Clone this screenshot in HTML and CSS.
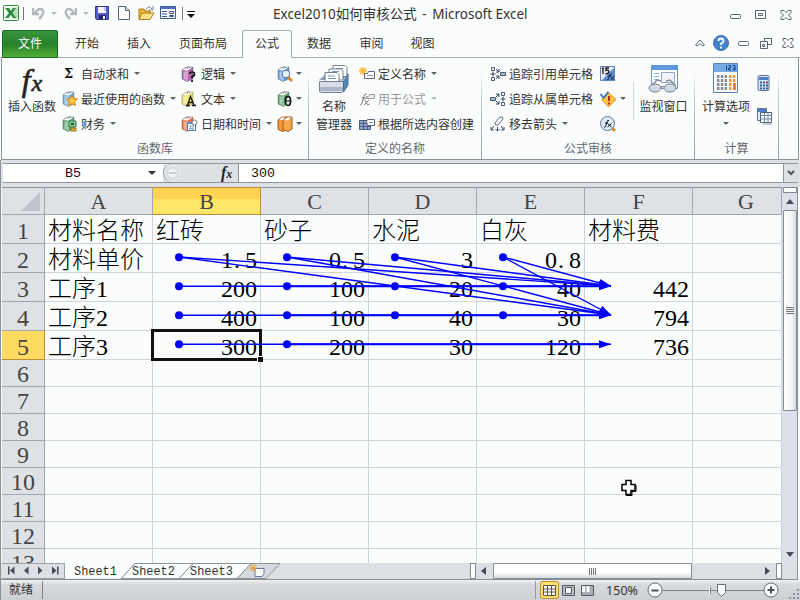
FILE: index.html
```html
<!DOCTYPE html>
<html lang="zh-CN">
<head>
  <meta charset="UTF-8">
  <title>Excel2010如何审核公式 - Microsoft Excel</title>
  <link rel="stylesheet" href="styles.css">
</head>
<body>
  <!-- Shared symbols -->
  <svg class="defs" width="0" height="0">
    <symbol id="book" viewBox="0 0 16 16">
      <path d="M1 4 L5 1 L12 1 L12 13 L6 15.5 L1 13Z" fill="currentColor" stroke="#556" stroke-opacity=".4"/>
      <path d="M1.5 4 L5.5 1.5 L11.5 1.5 L6.5 4.5Z" fill="#fff"/>
      <path d="M2.5 5.5 V13 L5 14 V5.5Z" fill="#fff" opacity=".45"/>
      <path d="M6 4.5 V15" stroke="#fff" opacity=".7"/>
      <path d="M6 3 Q7 -1 9 2" fill="none" stroke="#888"/>
    </symbol>
    <symbol id="close" viewBox="0 0 12 10">
      <path d="M1 .5h3l2 2 2-2h3v2L8.500 5 11 7.500v2H8l-2-2-2 2H1v-2L3.500 5 1 2.500z" fill="#fff" stroke="#5c6270"/>
    </symbol>
  </svg>

  <div class="window">
    <!-- Title bar -->
    <div class="titlebar">
      <div class="quick">
        <svg class="q-logo" width="16" height="16"><rect x=".5" y=".5" width="15" height="15" rx="1" fill="#f4fbf2" stroke="#2f8a3b"/><path d="M10 2h5v12h-5z" fill="#d4e9d0"/><path d="M2 3h4l2 3 2-3h3L9.500 8l4 5H10L7.700 9.700 5.500 13H2l4-5z" fill="#25893a"/><path d="M10.500 5h4M10.500 8h4M10.500 11h4" stroke="#8cbb8b"/></svg>
        <i class="sep"></i>
        <svg class="q-undo" width="13" height="13"><path d="M1 1v6h6" fill="none" stroke="#b4b8be" stroke-width="2.500"/><path d="M3 6 Q7 0 10.500 3 Q13 6 7 12" fill="none" stroke="#b4b8be" stroke-width="2.500"/></svg>
        <i class="arrow dim"></i>
        <svg class="q-redo" width="13" height="13"><path d="M12 1v6H6" fill="none" stroke="#b4b8be" stroke-width="2.500"/><path d="M10 6 Q6 0 2.500 3 Q0 6 6 12" fill="none" stroke="#b4b8be" stroke-width="2.500"/></svg>
        <i class="arrow dim"></i>
        <svg class="q-save" width="14" height="14"><path d="M.5.5h13v13h-12l-1-1z" fill="#5660c8" stroke="#353d98"/><path d="M3 1h8v6H3z" fill="#f3f6ff"/><path d="M9 1h2v4H9z" fill="#b8c4ee"/><path d="M4 9h7v4H4z" fill="#23265e"/><path d="M8 10h2v3H8z" fill="#fff"/></svg>
        <svg class="q-new" width="12" height="14"><path d="M.5.5h7l4 4v9H.5z" fill="#fff" stroke="#53627c"/><path d="M7.500.5v4h4" fill="#dbe5f4" stroke="#53627c"/></svg>
        <svg class="q-open" width="17" height="15"><path d="M1 3h5l1 2h5v8H1z" fill="#e9b33c" stroke="#a97714"/><path d="M1 13.500 L4 7h12l-4 6.500z" fill="#ffe08a" stroke="#b07c15"/><path d="M8 3 Q11-1 14 3M15 0v4h-4" fill="none" stroke="#7b8ca6"/></svg>
        <svg class="q-form" width="16" height="14"><path d="M.5.5h15v12H.5z" fill="#f4f7fc" stroke="#40598c"/><path d="M1 1h14v2H1z" fill="#4b72bb"/><path d="M2 5.500h5M2 8h5M2 10.500h5" stroke="#40598c"/><path d="M9.500 5.500h4v2h-4zM9.500 9.500h4v1h-4z" fill="#fff" stroke="#40598c"/></svg>
        <i class="sep sep-last"></i>
        <svg class="q-more" width="8" height="7"><path d="M0 .5h8" stroke="#111"/><path d="M0 3h8l-4 4z" fill="#111"/></svg>
      </div>
      <div class="title">Excel2010如何审核公式 <span>-</span> Microsoft Excel</div>
      <div class="win-buttons">
        <svg width="12" height="10"><rect x=".5" y="4.500" width="10" height="4" rx="1" fill="#fff" stroke="#5c6270"/></svg>
        <svg width="12" height="10"><path d="M.5.5h10v8H.5zM3.500 3.500h4v2h-4z" fill="#fff" stroke="#5c6270"/></svg>
        <svg width="12" height="10"><use href="#close"/></svg>
      </div>
    </div>

    <!-- Ribbon tabs -->
    <div class="tabs">
      <div class="tab file">文件</div>
      <div class="tab">开始</div>
      <div class="tab">插入</div>
      <div class="tab wide">页面布局</div>
      <div class="tab active">公式</div>
      <div class="tab">数据</div>
      <div class="tab">审阅</div>
      <div class="tab">视图</div>
      <div class="tab-tools">
        <svg width="10" height="8"><path d="M.5 6 L5 1 L9.500 6 L7.500 7 L5 4.500 L2.500 7Z" fill="#fff" stroke="#5c6270"/></svg>
        <svg class="help" width="16" height="16"><circle cx="8" cy="8" r="7.500" fill="#4285cf" stroke="#3a6db5"/><path d="M5.500 6 Q5.500 3.500 8 3.500 T10.500 6 Q10.500 7.500 8 8.500 V10M8 11.500v2" fill="none" stroke="#fff" stroke-width="1.800"/></svg>
        <svg width="12" height="10"><rect x=".5" y="3.500" width="10" height="4" rx="1" fill="#fff" stroke="#5c6270"/></svg>
        <svg width="12" height="11"><path d="M4.500.5h7v6h-7z" fill="#fff" stroke="#5c6270"/><path d="M.5 3.500h7v7h-7zM2.500 6.500h2v2h-2z" fill="#fff" stroke="#5c6270"/></svg>
        <svg width="12" height="10"><use href="#close"/></svg>
      </div>
    </div>

    <!-- Ribbon -->
    <div class="ribbon">
      <div class="group g-lib">
        <div class="group-body">
          <div class="big insert-fn">
            <div class="fx">f<span>x</span></div>
            <div>插入函数</div>
          </div>
          <div class="col c1">
            <div class="item"><b class="sigma">Σ</b>自动求和<i class="arrow"></i></div>
            <div class="item"><svg width="16" height="16"><use href="#book" color="#6fb0e3"/><path d="M10 4l1.600 3.700 4 .3-3 2.600 1 4L10 12.500 6.400 14.600l1-4-3-2.600 4-.3z" fill="#ffc739" stroke="#d58512"/></svg>最近使用的函数<i class="arrow"></i></div>
            <div class="item"><svg width="16" height="16"><use href="#book" color="#58a46e"/><path d="M7 5h7v6H7z" fill="#8ac496" stroke="#3b7e4c"/><path d="M9 8h3" stroke="#245f35" stroke-width="2"/><path d="M9 12h5v3H9z" fill="#e5b03c" stroke="#9a7118"/></svg>财务<i class="arrow"></i></div>
          </div>
          <div class="col c2">
            <div class="item"><svg width="16" height="16"><use href="#book" color="#b565ad"/><path d="M9 8q0-2 2-2 2.500 0 2.500 2t-2.500 2.500v2M11 14v2" fill="none" stroke="#111" stroke-width="1.700"/></svg>逻辑<i class="arrow"></i></div>
            <div class="item"><svg width="16" height="16"><use href="#book" color="#eddf55"/><path d="M5 14.500h4M11 14.500h4M6.500 14 L9.500 5.500 L13 14M8 11.500h4" fill="none" stroke="#111" stroke-width="1.300"/></svg>文本<i class="arrow"></i></div>
            <div class="item"><svg width="16" height="16"><use href="#book" color="#ed7040"/><path d="M6.500 6.500h8v8h-8z" fill="#fff" stroke="#5373b0"/><path d="M6 6h9v2H6z" fill="#6b90d2"/><path d="M8 10h5M8 12.500h5M9.500 9v5M12 9v5" stroke="#93a9d0"/><circle cx="13.500" cy="6.500" r="2.500" fill="#fff" stroke="#777"/></svg>日期和时间<i class="arrow"></i></div>
          </div>
          <div class="col c3">
            <div class="item"><svg width="16" height="16"><use href="#book" color="#5c9bdc"/><path d="M11 11l4 4" stroke="#cf8428" stroke-width="2.500"/><circle cx="9" cy="8" r="3.800" fill="#e5f3ff" stroke="#60758f"/></svg><i class="arrow"></i></div>
            <div class="item"><svg width="16" height="16"><use href="#book" color="#58a46e"/><ellipse cx="11" cy="10" rx="2.600" ry="4.500" fill="#d9ecd9" stroke="#111" stroke-width="1.700"/><path d="M8.500 10h5" stroke="#111"/></svg><i class="arrow"></i></div>
            <div class="item"><svg width="16" height="16"><path d="M1 4l4-3h5v12l-4 2.500-5-2z" fill="#f0953a" stroke="#a8611c"/><path d="M6 4l4-3h5v12l-4 2.500-5-2z" fill="#f6a748" stroke="#a8611c"/><path d="M7 4l3.500-2.500H14L11 4.500zM2 4l3-2.500h3L6 4z" fill="#fff"/></svg><i class="arrow"></i></div>
          </div>
        </div>
        <div class="group-name">函数库</div>
      </div>

      <div class="group g-names">
        <div class="group-body">
          <div class="big name-mgr">
            <svg width="32" height="30" class="big-icon"><path d="M1 16 L9 9 L30 9 L25 16Z" fill="#8da3bd"/><path d="M15 1.500h12l2 2v9H15z" fill="#fff" stroke="#76808f"/><path d="M11 5h12l2 2v9H11z" fill="#fff" stroke="#76808f"/><path d="M7 8.500h12l2 2v8H7z" fill="#fff" stroke="#76808f"/><path d="M10 12h7M10 14.500h8M18 4.500h7M14 7.500h7" stroke="#7a93b5"/><path d="M1.500 17.500h24v10l-2 1h-20l-2-1z" fill="#d8dde5" stroke="#75839a"/><path d="M25.500 17.500 L30 10 V21 L25.500 28Z" fill="#5488bd" stroke="#466a91"/><path d="M2 23h23v4H2z" fill="#aab5c5"/></svg>
            <div>名称</div>
            <div>管理器</div>
          </div>
          <div class="col c4">
            <div class="item"><svg width="16" height="16"><path d="M4 1v8M0 5h8M1 2l6 6M7 2L1 8" stroke="#f3b72a" stroke-width="1.400"/><path d="M5.500 7.500h3l1-2h6v7h-10z" fill="#fff" stroke="#5a6980"/><path d="M8 9.500h6" stroke="#8494ad"/></svg>定义名称<i class="arrow"></i></div>
            <div class="item off"><svg width="16" height="16"><path d="M1 14q2 0 3-5l1-4q1-3 3-2M3 7h4M5.500 9q1 0 2 3t3 1M10 9l-5 5" fill="none" stroke="#777"/><path d="M7.500 5.500h2l1-2h5v4h-8z" fill="#eee" stroke="#999"/></svg>用于公式<i class="arrow dim"></i></div>
            <div class="item"><svg width="16" height="16"><path d="M.5 4.500h11v9H.5z" fill="#8fa9d2" stroke="#4c5d7c"/><path d="M1 7.500h10M1 10.500h10M4.500 5v8M8.500 5v8" stroke="#4c5d7c"/><path d="M7.500 5.500l1-2h7v6h-7z" fill="#fff" stroke="#5b6578"/><path d="M10 6.500h4" stroke="#6d87b5"/></svg>根据所选内容创建</div>
          </div>
        </div>
        <div class="group-name">定义的名称</div>
      </div>

      <div class="group g-audit">
        <div class="group-body">
          <div class="col c5">
            <div class="item"><svg width="16" height="16"><path d="M1.500 1.500h3v3h-3zM1.500 11.500h3v3h-3z" fill="#fff" stroke="#4c5b74"/><path d="M3 5.500v5M.5 8h5M6 3l3 3M6 13l3-3M9 3v3H6M9 13v-3H6" fill="none" stroke="#34435c"/><path d="M10.500 6.500h5v3h-5z" fill="#a8b9cf" stroke="#4c5b74"/></svg>追踪引用单元格</div>
            <div class="item"><svg width="16" height="16"><path d="M11.500 1.500h3v3h-3zM11.500 11.500h3v3h-3z" fill="#fff" stroke="#4c5b74"/><path d="M13 5.500v5M10.500 8h5M6 6l3-3M6 10l3 3M6 3h3v3M6 13h3v-3" fill="none" stroke="#34435c"/><path d="M.5 6.500h5v3h-5z" fill="#a8b9cf" stroke="#4c5b74"/></svg>追踪从属单元格</div>
            <div class="item"><svg width="16" height="16"><path d="M5 7l5-6q3-1 3 2L8 9q-3 1-3-2z" fill="#fff" stroke="#536b91"/><path d="M4 10l-3 4M7.500 11v4M11 10l3 4M1 11v3h3M5.500 13l2 2 2-2M11 14h3v-3" fill="none" stroke="#3c4a64"/></svg>移去箭头<i class="arrow"></i></div>
          </div>
          <div class="col c6">
            <div class="item"><svg width="16" height="16"><path d="M.5.5h14v14H.5z" fill="#e8eef7" stroke="#6683b3"/><path d="M15 1v14H1z" fill="#5d89c9"/><path d="M2 3l1-1v6M9 2H6v2.500q3-1 3 1T5.500 8" fill="none" stroke="#111" stroke-width="1.300"/><path d="M7 14q2 0 2-3t3-3M8 10h3M10 10l4 4M14 10l-3 4" fill="none" stroke="#15305d"/></svg></div>
            <div class="item"><svg width="16" height="16"><path d="M8.500 1.500 L16 8.500 L8.500 16 L1.500 8.500Z" fill="#ffc740" stroke="#d9942b"/><path d="M.5 3l3 4 5-6" fill="none" stroke="#3e7bc9" stroke-width="2"/><path d="M9 5v5M9 11.500v2" stroke="#bb2c15" stroke-width="2"/></svg><i class="arrow"></i></div>
            <div class="item"><svg width="16" height="16"><path d="M12 12l3 3" stroke="#d88b2c" stroke-width="3"/><circle cx="7.500" cy="7.500" r="7" fill="#dcecfb" stroke="#61748e"/><path d="M4 11.500q2 0 2.500-4t2.500-3M5 7h3M7.500 7.500l4 3.500M11.500 7.500l-4 3.500" fill="none" stroke="#111"/></svg></div>
          </div>
          <div class="watch">
            <svg width="32" height="30" class="big-icon"><path d="M4.500 1.500h26v23h-26z" fill="#fff" stroke="#6c94cc"/><path d="M4 1h27v5H4z" fill="#5f98dc"/><path d="M7 9.500h5M7 12.500h5M7 15.500h5" stroke="#8cb2df"/><path d="M14.500 8.500h13v10h-13z" fill="#f2f6fb" stroke="#98a9bc"/><path d="M4 22l6-6 4 1M29 22l-6-6-4 1M13 24q3-3 6 0" fill="none" stroke="#858d98" stroke-width="1.500"/><ellipse cx="8" cy="24" rx="6" ry="4" fill="#cfdae5" stroke="#747e8b"/><ellipse cx="23" cy="24" rx="6" ry="4" fill="#cfdae5" stroke="#747e8b"/></svg>
            <div>监视窗口</div>
          </div>
        </div>
        <div class="group-name">公式审核</div>
      </div>

      <div class="group g-calc">
        <div class="group-body">
          <div class="big calc-opt">
            <svg width="26" height="31" class="big-icon"><path d="M.5.5h24v29H.5z" fill="#fdfdff" stroke="#5b7fba"/><path d="M1 1h23v8H1z" fill="#73abe6"/><path d="M13.500 2.500v5M15.500 2.500h2v2.500h-2v2h2.500M19.500 2.500h2.500v4.500h-2.500M20 5h2" fill="none" stroke="#173d82"/><path d="M4 13.500h10M4 17.500h10M4 21.500h10M4 25.500h10" stroke="#858b95" stroke-width="3" stroke-dasharray="2.500 1.300"/><path d="M16 13.500h7M16 17.500h7M16 21.500h3M16 25.500h3" stroke="#e59b45" stroke-width="3" stroke-dasharray="2.500 1.300"/><path d="M21.500 20v7" stroke="#de6b28" stroke-width="2.500"/></svg>
            <div>计算选项</div>
            <i class="arrow"></i>
          </div>
          <div class="calc-icons">
            <svg width="13" height="17"><rect x="1" y=".5" width="11" height="15" rx="1.500" fill="#d9e5f5" stroke="#5d7192"/><path d="M2 2h9v3H2z" fill="#4c7ecb"/><path d="M3 7.500h8M3 10.500h8M3 13.500h8" stroke="#315da5" stroke-width="2" stroke-dasharray="2 1"/><path d="M9 7.500h2" stroke="#cc4b43" stroke-width="2"/></svg>
            <svg width="17" height="17"><path d="M1.500.5h9v12h-9z" fill="#e1eaf6" stroke="#60728f"/><path d="M2 1h8v3H2z" fill="#4c7ecb"/><path d="M4.500 4.500h11v10h-11z" fill="#fff" stroke="#53647d"/><path d="M5 7.500h10M5 11h10M8.500 5v9M12 5v9" stroke="#7187a8"/><path d="M7 16h9" stroke="#8e99a7"/></svg>
          </div>
        </div>
        <div class="group-name">计算</div>
      </div>
    </div>

    <!-- Formula bar -->
    <div class="formula-bar">
      <div class="name-box"><span>B5</span><i class="arrow black"></i></div>
      <div class="fx-area"><i class="knob"></i><div class="fx small">f<span>x</span></div></div>
      <div class="formula">300</div>
      <div class="expand"><svg width="8" height="6"><path d="M1 1l3 3 3-3" fill="none" stroke="#50555c" stroke-width="2"/></svg></div>
    </div>

    <!-- Worksheet -->
    <div class="main">
      <div class="sheet">
        <table>
          <tr class="head"><th class="corner"><svg width="19" height="19"><path d="M19 0v19H0z" fill="#bfc4ca"/></svg></th><th>A</th><th class="sel">B</th><th>C</th><th>D</th><th>E</th><th>F</th><th class="last">G</th></tr>
          <tr><th>1</th><td class="t">材料名称</td><td class="t">红砖</td><td class="t">砂子</td><td class="t">水泥</td><td class="t">白灰</td><td class="t">材料费</td><td></td></tr>
          <tr><th>2</th><td class="t">材料单价</td><td>1<s>.</s>5</td><td>0<s>.</s>5</td><td>3</td><td>0<s>.</s>8</td><td></td><td></td></tr>
          <tr><th>3</th><td class="t">工序1</td><td>200</td><td>100</td><td>20</td><td>40</td><td>442</td><td></td></tr>
          <tr><th>4</th><td class="t">工序2</td><td>400</td><td>100</td><td>40</td><td>30</td><td>794</td><td></td></tr>
          <tr><th class="sel">5</th><td class="t">工序3</td><td>300</td><td>200</td><td>30</td><td>120</td><td>736</td><td></td></tr>
          <tr class="short"><th>6</th><td></td><td></td><td></td><td></td><td></td><td></td><td></td></tr>
          <tr class="short"><th>7</th><td></td><td></td><td></td><td></td><td></td><td></td><td></td></tr>
          <tr class="short"><th>8</th><td></td><td></td><td></td><td></td><td></td><td></td><td></td></tr>
          <tr class="short"><th>9</th><td></td><td></td><td></td><td></td><td></td><td></td><td></td></tr>
          <tr class="short"><th>10</th><td></td><td></td><td></td><td></td><td></td><td></td><td></td></tr>
          <tr class="short"><th>11</th><td></td><td></td><td></td><td></td><td></td><td></td><td></td></tr>
          <tr class="short"><th>12</th><td></td><td></td><td></td><td></td><td></td><td></td><td></td></tr>
          <tr class="short"><th>13</th><td></td><td></td><td></td><td></td><td></td><td></td><td></td></tr>
        </table>
        <div class="selection"><i></i></div>

        <!-- Tracer arrows -->
        <svg class="tracers" width="780" height="376" viewBox="2 187 780 376">
          <defs>
            <marker id="head" markerUnits="userSpaceOnUse" markerWidth="12" markerHeight="8" refX="12" refY="4" orient="auto"><path d="M0 0 L12 4 L0 8Z" fill="#00f"/></marker>
          </defs>
          <g stroke="#00f" stroke-width="1.400" fill="none" marker-end="url(#head)">
            <path d="M179 257L611 286"/><path d="M287 257L611 286"/><path d="M395 257L611 286"/><path d="M503 257L611 286"/>
            <path d="M179 257L611 315"/><path d="M287 257L611 315"/><path d="M395 257L611 315"/><path d="M503 257L611 315"/>
            <path d="M179 286.300H611"/><path d="M179 315.300H611"/><path d="M179 344.300H611"/>
          </g>
          <path d="M287 286.300H602M287 315.300H602M287 344.300H602" stroke="#00f" stroke-width="2"/>
          <g fill="#00f">
            <circle cx="179" cy="257.300" r="4"/><circle cx="287" cy="257.300" r="4"/><circle cx="395" cy="257.300" r="4"/><circle cx="503" cy="257.300" r="4"/>
            <circle cx="179" cy="286.300" r="4"/><circle cx="287" cy="286.300" r="4"/><circle cx="395" cy="286.300" r="4"/><circle cx="503" cy="286.300" r="4"/>
            <circle cx="179" cy="315.300" r="4"/><circle cx="287" cy="315.300" r="4"/><circle cx="395" cy="315.300" r="4"/><circle cx="503" cy="315.300" r="4"/>
            <circle cx="179" cy="344.300" r="4"/><circle cx="287" cy="344.300" r="4"/>
          </g>
          <path d="M626 480.500h5v4h4v6h-4v4h-5v-4h-4v-6h4z" fill="#fff" stroke="#000" stroke-width="1.500"/>
          <path d="M636 485v6.500h-4v4h-6" fill="none" stroke="#000"/>
        </svg>
      </div>
      <div class="vscroll">
        <div class="split"></div>
        <div class="up"></div>
        <div class="thumb"><i></i></div>
        <div class="down"></div>
      </div>
    </div>

    <!-- Sheet tabs and horizontal scrollbar -->
    <div class="bottom">
      <div class="nav">
        <svg width="60" height="15"><path d="M6 2.500h1.500v8H6zM12.500 2.500v8l-4.500-4zM26.500 2.500v8l-4.500-4zM36 2.500v8l4.500-4zM50 2.500v8l4.500-4zM55 2.500h1.500v8H55z" fill="#464c55"/></svg>
      </div>
      <div class="sheet-tabs">
        <svg width="219" height="16"><path d="M172 15.500h29l14-15h-29z" fill="#d5d9de" stroke="#8e949c"/><path d="M114 15.500h58l14-15h-58z" fill="#fbfdfd" stroke="#8e949c"/><path d="M56 15.500h58l14-15H70z" fill="#fbfdfd" stroke="#8e949c"/><path d="M0 0h70L56 15.500H0z" fill="#fbfdfd"/><path d="M70 .5L56 15.500" stroke="#8e949c"/><path d="M190 5.500h9v5l-2 3h-7z" fill="#fff" stroke="#66789a"/><path d="M188 1v8M184 5h8M185 2l6 6M191 2l-6 6" stroke="#e9a02a"/></svg>
        <div class="tab-names"><span>Sheet1</span><span>Sheet2</span><span>Sheet3</span></div>
      </div>
      <div class="hscroll">
        <i class="grip"></i>
        <i class="left"></i>
        <div class="hthumb"><i></i></div>
        <i class="right"></i>
        <i class="grip"></i>
      </div>
    </div>

    <!-- Status bar -->
    <div class="status">
      <div class="ready">就绪</div>
      <div class="views">
        <div class="view on"><svg width="13" height="11"><path d="M.5.5h12v10H.5zM.5 4h12M.5 7h12M4.500.5v10M8.500.5v10" fill="#fff" stroke="#5a5648"/></svg></div>
        <div class="view"><svg width="13" height="11"><path d="M.5.5h12v10H.5z" fill="#b9bdc3" stroke="#555a62"/><path d="M3.500 2.500h6v6h-6z" fill="#fff" stroke="#555a62"/></svg></div>
        <div class="view"><svg width="13" height="11"><path d="M.5.5h12v10H.5z" fill="#a9aeb5" stroke="#555a62"/><path d="M1 1h3v6H1zM5.500 1h3v6h-3z" fill="#fff"/></svg></div>
      </div>
      <div class="percent">150%</div>
      <svg class="zoom" width="135" height="20"><path d="M16 10.500h102" stroke="#7d838b"/><path d="M62.500 7v7" stroke="#fff"/><path d="M63.500 7v7" stroke="#7d838b"/><circle cx="8" cy="10" r="7" fill="#fafbfc" stroke="#666c74"/><path d="M4.500 10.500h7" stroke="#4d525a" stroke-width="2"/><circle cx="124" cy="10" r="7" fill="#fafbfc" stroke="#666c74"/><path d="M120.500 10h7M124 6.500v7" stroke="#4d525a" stroke-width="2"/><path d="M70.500 4.500h8v8l-4 4-4-4z" fill="#fafbfc" stroke="#666c74"/></svg>
      <svg class="resize" width="12" height="12"><path d="M9 1h2v2H9zM5 5h2v2H5zM9 5h2v2H9zM1 9h2v2H1zM5 9h2v2H5zM9 9h2v2H9z" fill="#8f959d"/></svg>
    </div>
  </div>
</body>
</html>
```

FILE: styles.css
```css
* {
  box-sizing: border-box;
}

body {
  margin: 0;
  overflow: hidden;
  font-family: "Noto Sans", "Noto Sans CJK SC", sans-serif;
  font-size: 12px;
  color: #333;
}

svg {
  display: block;
  flex: none;
}

.defs {
  position: absolute;
}

.window {
  display: flex;
  flex-direction: column;
  width: 800px;
  height: 600px;
  background: #fbfdfd;
  overflow: hidden;
}

.arrow {
  flex: none;
  width: 0;
  height: 0;
  border: 3px solid transparent;
  border-top-color: #5f646b;
  border-bottom: 0;
}

.arrow.dim {
  border-top-color: #b4b8be;
}

.arrow.black {
  border-width: 4px 4px 0;
  border-top-color: #333;
}

/* Title bar */
.titlebar {
  display: flex;
  height: 29px;
  align-items: center;
}

.quick {
  display: flex;
  align-items: center;
  width: 273px;
  padding: 0 0 3px 3px;
}

.sep {
  width: 1px;
  height: 13px;
  margin-left: 4px;
  background: #777;
}

.q-undo, .q-redo { margin: 0 6px 0 8px; }
.q-undo { margin-left: 8px; }
.q-redo { margin-left: 7px; }
.q-save { margin-left: 6px; }
.q-new { margin-left: 9px; }
.q-open { margin-left: 8px; }
.q-form { margin-left: 5px; }
.sep-last { margin-left: 6px; }
.q-more { margin: 3px 0 0 4px; }

.title {
  width: 430px;
  font-size: 13.500px;
  line-height: 26px;
  padding-bottom: 2px;
  white-space: nowrap;
}

.title span {
  margin: 0 2px;
}

.win-buttons {
  display: flex;
  gap: 13px;
  margin-left: 27px;
}

/* Tabs */
.tabs {
  display: flex;
  flex: none;
  height: 29px;
  padding-left: 2px;
  border-bottom: 1px solid #a5abb1;
}

.tab {
  width: 58px;
  height: 28px;
  line-height: 30px;
  text-align: center;
}

.tab.file {
  width: 56px;
  margin-top: 1px;
  color: #fff;
  background: linear-gradient(#3b9440, #26802c 50%, #52ad35);
  border: 1px solid #19692a;
  border-radius: 2px 2px 0 0;
  line-height: 26px;
}

.tab:nth-child(3) {
  width: 46px;
}

.tab.wide {
  width: 82px;
}

.tab.active {
  width: 50px;
  height: 28px;
  margin: 1px 0 0 -2px;
  line-height: 26px;
  background: #fbfdfd;
  border: 1px solid #a5abb1;
  border-bottom: 0;
  border-radius: 3px 3px 0 0;
}

.tab.active + .tab {
  width: 54px;
}

.tab:nth-child(7), .tab:nth-child(8) {
  width: 51px;
}

.tab-tools {
  display: flex;
  align-items: center;
  gap: 10px;
  margin: 0 6px 0 auto;
}

.tab-tools .help {
  margin: 0 -1px 0 -2px;
}

/* Ribbon */
.ribbon {
  display: flex;
  flex: none;
  height: 102px;
  margin: 0 1px 0 1px;
  border: 1px solid #8a9097;
  border-top: 0;
}

.group {
  height: 101px;
  border-right: 1px solid;
  border-image: linear-gradient(#fbfdfd 15%, #c3c8ce 40%, #989ea6) 1;
}

.g-lib { width: 307px; }
.g-names { width: 173px; }
.g-audit { width: 213px; }
.g-calc { width: 84px; }

.group-body {
  display: flex;
  height: 80px;
  padding-top: 3px;
}

.group-name {
  line-height: 22px;
  text-align: center;
  color: #62686f;
}

.big {
  display: flex;
  flex-direction: column;
  align-items: center;
  line-height: 18px;
  white-space: nowrap;
}

.big-icon {
  margin: 3px 0 4px;
}

.fx {
  height: 36px;
  font: italic bold 32px/36px "Liberation Serif", serif;
  color: #222;
}

.fx span {
  font-size: 24px;
  margin-left: 1px;
}

.insert-fn .fx {
  font-weight: normal;
  -webkit-text-stroke: .6px #222;
}

.fx.small {
  height: 18px;
  font-size: 16px;
  line-height: 18px;
}

.fx.small span {
  font-size: 12px;
  margin-left: 0;
}

.col {
  flex: none;
  white-space: nowrap;
}

.item {
  display: flex;
  align-items: center;
  height: 25px;
}

.item svg {
  margin-right: 3px;
  overflow: visible;
}

.item .arrow {
  margin-left: 5px;
}

.item.off {
  color: #999;
}

.sigma {
  width: 14px;
  margin: 0 3px 0 2px;
  font-family: "DejaVu Serif", serif;
  font-size: 13px;
  color: #111;
}

.insert-fn {
  width: 60px;
  padding-top: 1px;
}

.c1 { width: 119px; }
.c2 { width: 96px; }
.c2 .item svg { margin-right: 4px; }
.c3 .item .arrow { margin-left: 0; }

.name-mgr {
  width: 50px;
}

.c5 {
  width: 110px;
  padding-left: 8px;
}

.c6 {
  width: 41px;
  padding-left: 8px;
}

.c6 .item .arrow {
  margin-left: 1px;
}

.watch {
  width: 60px;
  height: 38px;
  margin: 21px 0 0 0;
  border-left: 1px solid #d0d4d9;
  line-height: 18px;
  text-align: center;
}

.watch .big-icon {
  margin: -18px 0 4px 13px;
}

.calc-opt {
  width: 62px;
}

.calc-opt .big-icon {
  margin: 2px 0 4px;
}

.calc-opt .arrow {
  margin-top: 6px;
}

.calc-icons {
  padding: 14px 0 0 0;
}

.calc-icons svg + svg {
  margin-top: 16px;
  margin-left: -1px;
}

/* Formula bar */
.formula-bar {
  display: flex;
  flex: none;
  height: 27px;
  padding: 3px 2px 4px;
  background: #dde1e5;
  border-left: 1px solid #8a9097;
  font-family: "Liberation Mono", monospace;
  font-size: 13.300px;
  color: #111;
}

.formula-bar > div {
  display: flex;
  align-items: center;
  height: 20px;
  border-top: 1px solid #8e949c;
  border-bottom: 1px solid #8e949c;
}

.name-box {
  width: 160px;
  background: #fff;
}

.name-box span {
  width: 140px;
  text-align: center;
}

.name-box .arrow {
  margin-left: 5px;
}

.fx-area {
  width: 75px;
  background: #dde1e5;
}

.knob {
  width: 18px;
  height: 18px;
  margin: 0 40px 0 0;
  border-left: 1px solid #9ba1a8;
  border-radius: 9px;
  background: linear-gradient(#c8ccd1, #c8ccd1) center / 7px 2px no-repeat, radial-gradient(#f0f2f3 4px, #d3d7db 5px, #e4e7ea 7px);
}

.formula {
  flex: 1;
  padding-left: 12px;
  background: #fff;
  border-left: 1px solid #8e949c;
}

.expand {
  justify-content: center;
  width: 15px;
  border-left: 1px solid #8e949c;
}

/* Worksheet */
.main {
  display: flex;
  flex: none;
  height: 376px;
  padding: 0 2px 0 1px;
  border-left: 1px solid #8a9097;
}

.sheet {
  position: relative;
  width: 780px;
  overflow: hidden;
}

table {
  width: 780px;
  table-layout: fixed;
  border-spacing: 0;
  font: 24px/24px "Liberation Serif", "Noto Sans CJK SC", serif;
  color: #000;
}

th, td {
  width: 108px;
  height: 29px;
  padding: 0 3px 0 0;
  border-right: 1px solid #d0d3d8;
  border-bottom: 1px solid #d0d3d8;
  text-align: right;
  vertical-align: bottom;
  white-space: nowrap;
}

th {
  padding: 0;
  font-weight: normal;
  color: #444;
  text-align: center;
  background: #dee2e6;
  border-color: #a0a6ad;
}

th:first-child {
  width: 43px;
}

th.last {
  width: 89px;
}

.head th {
  height: 28px;
  font-size: 22px;
  border-top: 1px solid #8e949c;
}

.head th.last {
  padding-left: 18px;
}

.short th, .short td {
  height: 27px;
}

th.sel {
  background: linear-gradient(#ffd252 40%, #ffe568 45%);
  border-color: #c18c36;
}

th.sel:first-child {
  background: #ffdb61;
}

.corner svg {
  margin: 0 0 3px 19px;
}

td.t {
  padding: 0 0 0 3px;
  text-align: left;
  font-weight: 300;
}

td s {
  display: inline-block;
  width: 12px;
  padding-left: 1px;
  text-align: left;
  text-decoration: none;
}

.selection {
  position: absolute;
  left: 149px;
  top: 142px;
  width: 111px;
  height: 32px;
  border: 3px solid #111;
}

.selection i {
  position: absolute;
  right: -4px;
  bottom: -4px;
  width: 6px;
  height: 6px;
  background: #111;
  border: 1px solid #fff;
  border-width: 1px 0 0 1px;
}

.tracers {
  position: absolute;
  left: 0;
  top: 0;
}

/* Scrollbars */
.vscroll {
  display: flex;
  flex-direction: column;
  align-items: center;
  width: 16px;
  background: #dce0e8;
  border-right: 1px solid #8a9097;
}

.split {
  flex: none;
  width: 14px;
  height: 6px;
  background: #fff;
  border: 1px solid #858b93;
}

.up, .down {
  width: 0;
  height: 0;
  border: 4px solid transparent;
}

.up {
  margin: 6px 0 6px;
  border-bottom: 5px solid #444b55;
  border-top: 0;
}

.thumb {
  display: flex;
  flex: none;
  align-items: center;
  justify-content: center;
  width: 14px;
  height: 201px;
  background: linear-gradient(90deg, #fff, #f5f6f8 60%, #d6dbe1);
  border: 1px solid #858b93;
  border-radius: 1px;
}

.thumb i {
  width: 8px;
  height: 8px;
  background: repeating-linear-gradient(#777 0 1px, transparent 1px 2px);
}

.down {
  margin: auto 0 6px;
  border-top: 5px solid #444b55;
  border-bottom: 0;
}

.bottom {
  display: flex;
  flex: none;
  height: 17px;
  margin-right: 2px;
  padding-left: 1px;
  background: #dce0e5;
  border-left: 1px solid #8a9097;
  border-right: 1px solid #8a9097;
  border-bottom: 1px solid #858b93;
}

.nav {
  width: 63px;
  border: 1px solid #9ba1a8;
  border-left: 0;
}

.sheet-tabs {
  position: relative;
  width: 219px;
  height: 16px;
}

.tab-names {
  position: absolute;
  left: 9px;
  top: 0;
  font: 11.900px/19px "Liberation Mono", monospace;
  white-space: nowrap;
}

.tab-names span {
  display: inline-block;
  width: 58px;
}

.hscroll {
  display: flex;
  align-items: center;
  margin-left: auto;
  padding-right: 15px;
}

.grip {
  width: 6px;
  height: 16px;
  background: #fff;
  border: 1px solid #858b93;
}

.left, .right {
  width: 0;
  height: 0;
  border: 4px solid transparent;
}

.left {
  margin: 0 7px 0 5px;
  border-left: 0;
  border-right: 5px solid #444b55;
}

.right {
  margin: 0 6px 0 73px;
  border-right: 0;
  border-left: 5px solid #444b55;
}

.hthumb {
  display: flex;
  align-items: center;
  justify-content: center;
  width: 199px;
  height: 16px;
  background: linear-gradient(#fff 60%, #d6dbe1);
  border: 1px solid #858b93;
  border-radius: 1px;
}

.hthumb i {
  width: 8px;
  height: 7px;
  background: repeating-linear-gradient(90deg, #777 0 1px, transparent 1px 2px);
}

/* Status bar */
.status {
  display: flex;
  align-items: center;
  flex: 1;
  border-left: 1px solid #8a9097;
  background: linear-gradient(#f0f2f4, #d5d8dc 25%, #cdd1d6);
}

.ready {
  width: 42px;
  padding-left: 8px;
  line-height: 18px;
  border-right: 1px solid #7d838b;
}

.views {
  display: flex;
  margin-left: auto;
  padding-left: 4px;
  border-left: 1px solid #9197a0;
}

.view {
  display: flex;
  align-items: center;
  justify-content: center;
  width: 19px;
  height: 18px;
}

.view.on {
  background: #ffe06b;
  border: 1px solid #c2902d;
  border-radius: 2px;
}

.percent {
  width: 50px;
  font-size: 12.500px;
  text-align: center;
}

.zoom {
  margin-left: 0;
}

.resize {
  align-self: flex-end;
  margin-left: 6px;
}
```
